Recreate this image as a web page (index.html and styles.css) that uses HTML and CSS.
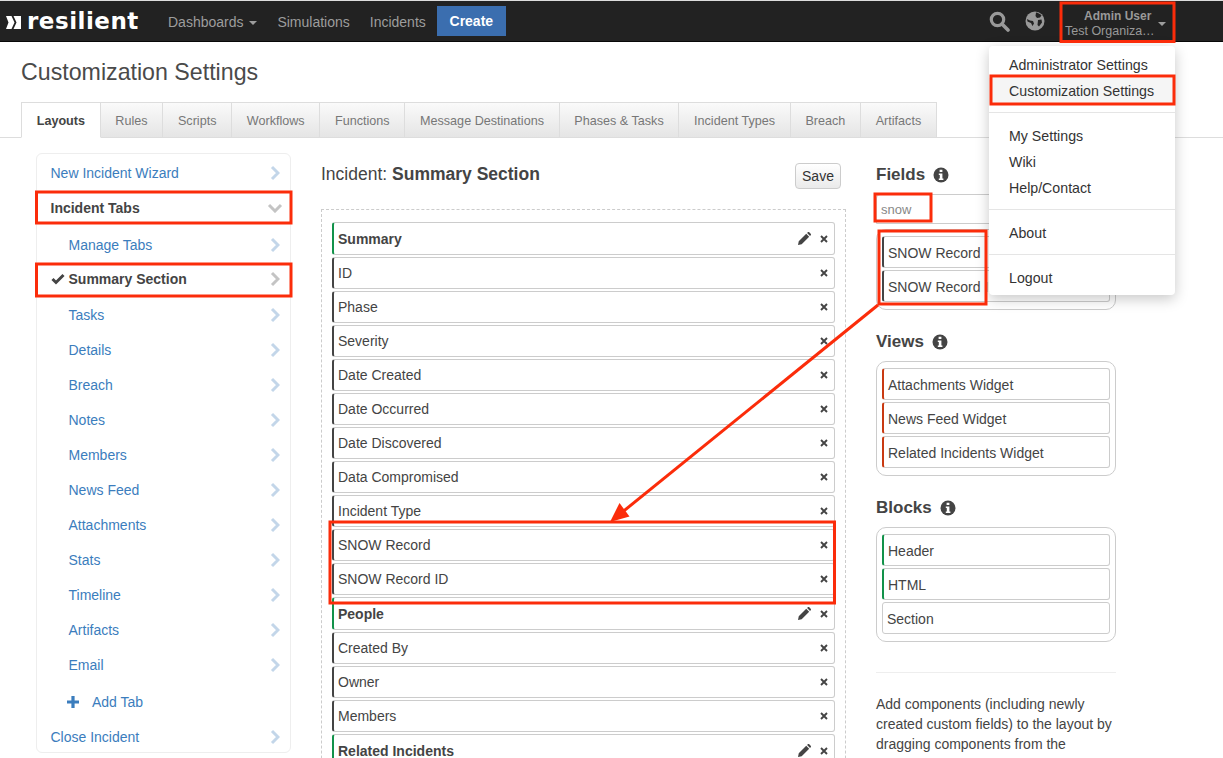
FILE: index.html
```html
<!DOCTYPE html>
<html lang="en">
<head>
  <meta charset="UTF-8" />
  <title>Customization Settings</title>
  <link rel="stylesheet" href="styles.css">
</head>
<body>

  <!-- Icon set, reused below with <use> -->
  <svg class="icon-defs" width="0" height="0">
    <symbol id="i-right" viewBox="0 0 10 16"><polyline points="2,2 8,8 2,14" fill="none" stroke="currentColor" stroke-width="3"/></symbol>
    <symbol id="i-down" viewBox="0 0 16 10"><polyline points="2,2 8,8 14,2" fill="none" stroke="currentColor" stroke-width="3"/></symbol>
    <symbol id="i-check" viewBox="0 0 14 12"><polyline points="1.5,6 5,9.5 12.5,2" fill="none" stroke="currentColor" stroke-width="3"/></symbol>
    <symbol id="i-plus" viewBox="0 0 12 12"><path d="M4.4 0h3.2v4.4H12v3.2H7.6V12H4.4V7.6H0V4.4h4.4z" fill="currentColor"/></symbol>
    <symbol id="i-x" viewBox="0 0 8 8"><path d="M1 1l6 6M7 1L1 7" fill="none" stroke="currentColor" stroke-width="1.9"/></symbol>
    <symbol id="i-pencil" viewBox="0 0 12 12"><path d="M0 12l.7-3.4L7.6 1.7l2.7 2.7-6.9 6.9zM8.4.9l.6-.6c.4-.4 1-.4 1.4 0l1.3 1.3c.4.4.4 1 0 1.4l-.6.6z" fill="currentColor"/></symbol>
    <symbol id="i-info" viewBox="0 0 16 16"><circle cx="8" cy="8" r="7.500" fill="currentColor"/><path d="M6.600 2.800h2.800v2.200H6.600zM5.800 6.400h3.600v5h1v1.600H5.800v-1.600h1V8h-1z" fill="#fff"/></symbol>
  </svg>

  <div class="page">
    <nav class="navbar">
      <a class="brand">
        <svg class="brand-mark" width="15" height="13" viewBox="0 0 15 13"><path d="M0 0h5.500l3 6.500-3 6.500H0l2.500-6.500zM7.500 0H15v13H7.500l3-6.500z" fill="#fff"/></svg>
        <span class="brand-name">resilient</span>
      </a>
      <a class="nav-link">Dashboards <span class="caret"></span></a>
      <a class="nav-link">Simulations</a>
      <a class="nav-link">Incidents</a>
      <button class="btn-create">Create</button>

      <div class="nav-right">
        <svg class="nav-icon" width="21" height="21" viewBox="0 0 21 21"><circle cx="8.500" cy="8.500" r="6.200" fill="none" stroke="#999" stroke-width="3.200"/><path d="M13 13l6 6" stroke="#999" stroke-width="3.600" stroke-linecap="round"/></svg>
        <svg class="nav-icon" width="20" height="20" viewBox="0 0 20 20"><circle cx="10" cy="10" r="9.500" fill="#999"/><path d="M11 1.500c2 .3 4 1.200 5.500 3l-1.500 2-3 .5-1.500-2zM13 9l3.500-.5.5 3-3 4-1.500-1.500zM2 8l3 1.500 3 .5 1 2.500L7.500 15 6 12 2.500 10.500z" fill="#222"/></svg>
        <div class="user-menu">
          <div class="user-text">
            <div class="user-name">Admin User</div>
            <div class="user-org">Test Organiza…</div>
          </div>
          <span class="caret"></span>
        </div>
      </div>
    </nav>

    <h1 class="page-title">Customization Settings</h1>

    <ul class="tabs">
      <li class="tab active">Layouts</li>
      <li class="tab">Rules</li>
      <li class="tab">Scripts</li>
      <li class="tab">Workflows</li>
      <li class="tab">Functions</li>
      <li class="tab">Message Destinations</li>
      <li class="tab">Phases &amp; Tasks</li>
      <li class="tab">Incident Types</li>
      <li class="tab">Breach</li>
      <li class="tab">Artifacts</li>
    </ul>

    <div class="columns">
      <aside class="sidebar">
        <a class="side-item">New Incident Wizard <svg class="chev"><use href="#i-right"/></svg></a>
        <a class="side-item current">Incident Tabs <svg class="chev-down"><use href="#i-down"/></svg></a>
        <a class="side-item sub first-sub">Manage Tabs <svg class="chev"><use href="#i-right"/></svg></a>
        <a class="side-item sub current selected"><svg class="check"><use href="#i-check"/></svg>Summary Section <svg class="chev"><use href="#i-right"/></svg></a>
        <a class="side-item sub">Tasks <svg class="chev"><use href="#i-right"/></svg></a>
        <a class="side-item sub">Details <svg class="chev"><use href="#i-right"/></svg></a>
        <a class="side-item sub">Breach <svg class="chev"><use href="#i-right"/></svg></a>
        <a class="side-item sub">Notes <svg class="chev"><use href="#i-right"/></svg></a>
        <a class="side-item sub">Members <svg class="chev"><use href="#i-right"/></svg></a>
        <a class="side-item sub">News Feed <svg class="chev"><use href="#i-right"/></svg></a>
        <a class="side-item sub">Attachments <svg class="chev"><use href="#i-right"/></svg></a>
        <a class="side-item sub">Stats <svg class="chev"><use href="#i-right"/></svg></a>
        <a class="side-item sub">Timeline <svg class="chev"><use href="#i-right"/></svg></a>
        <a class="side-item sub">Artifacts <svg class="chev"><use href="#i-right"/></svg></a>
        <a class="side-item sub">Email <svg class="chev"><use href="#i-right"/></svg></a>
        <a class="side-item add-tab"><svg class="plus"><use href="#i-plus"/></svg>Add Tab</a>
        <a class="side-item">Close Incident <svg class="chev"><use href="#i-right"/></svg></a>
      </aside>

      <section class="layout">
        <div class="layout-head">
          <h2 class="layout-title">Incident: <b>Summary Section</b></h2>
          <button class="btn-save">Save</button>
        </div>
        <div class="dropzone">
          <div class="row title green">Summary <svg class="edit"><use href="#i-pencil"/></svg><svg class="close"><use href="#i-x"/></svg></div>
          <div class="row">ID <svg class="close"><use href="#i-x"/></svg></div>
          <div class="row">Phase <svg class="close"><use href="#i-x"/></svg></div>
          <div class="row">Severity <svg class="close"><use href="#i-x"/></svg></div>
          <div class="row">Date Created <svg class="close"><use href="#i-x"/></svg></div>
          <div class="row">Date Occurred <svg class="close"><use href="#i-x"/></svg></div>
          <div class="row">Date Discovered <svg class="close"><use href="#i-x"/></svg></div>
          <div class="row">Data Compromised <svg class="close"><use href="#i-x"/></svg></div>
          <div class="row">Incident Type <svg class="close"><use href="#i-x"/></svg></div>
          <div class="row">SNOW Record <svg class="close"><use href="#i-x"/></svg></div>
          <div class="row">SNOW Record ID <svg class="close"><use href="#i-x"/></svg></div>
          <div class="row title green">People <svg class="edit"><use href="#i-pencil"/></svg><svg class="close"><use href="#i-x"/></svg></div>
          <div class="row">Created By <svg class="close"><use href="#i-x"/></svg></div>
          <div class="row">Owner <svg class="close"><use href="#i-x"/></svg></div>
          <div class="row">Members <svg class="close"><use href="#i-x"/></svg></div>
          <div class="row title green">Related Incidents <svg class="edit"><use href="#i-pencil"/></svg><svg class="close"><use href="#i-x"/></svg></div>
        </div>
      </section>

      <section class="palette">
        <h3 class="palette-title">Fields <svg class="info"><use href="#i-info"/></svg></h3>
        <input class="search" type="text" value="snow">
        <div class="palette-box">
          <div class="row">SNOW Record</div>
          <div class="row">SNOW Record ID</div>
        </div>

        <h3 class="palette-title">Views <svg class="info"><use href="#i-info"/></svg></h3>
        <div class="palette-box">
          <div class="row orange">Attachments Widget</div>
          <div class="row orange">News Feed Widget</div>
          <div class="row orange">Related Incidents Widget</div>
        </div>

        <h3 class="palette-title">Blocks <svg class="info"><use href="#i-info"/></svg></h3>
        <div class="palette-box">
          <div class="row green">Header</div>
          <div class="row green">HTML</div>
          <div class="row plain">Section</div>
        </div>

        <hr class="palette-rule">
        <p class="palette-help">Add components (including newly created custom fields) to the layout by dragging components from the</p>
      </section>
    </div>

    <!-- User dropdown, open over the page -->
    <ul class="dropdown">
      <li class="drop-item">Administrator Settings</li>
      <li class="drop-item hover">Customization Settings</li>
      <li class="drop-divider"></li>
      <li class="drop-item">My Settings</li>
      <li class="drop-item">Wiki</li>
      <li class="drop-item">Help/Contact</li>
      <li class="drop-divider"></li>
      <li class="drop-item">About</li>
      <li class="drop-divider"></li>
      <li class="drop-item">Logout</li>
    </ul>

    <!-- Red annotations drawn on top of the screenshot -->
    <svg class="annotations" width="1223" height="758" viewBox="0 0 1223 758">
      <g fill="none" stroke="#fb2c0a" stroke-width="3">
        <rect x="1061" y="3" width="113" height="38.500"/>
        <rect x="991" y="76" width="183" height="28"/>
        <rect x="36.500" y="192" width="254.500" height="31"/>
        <rect x="36.500" y="264" width="254.500" height="32"/>
        <rect x="875" y="194" width="56" height="27"/>
        <rect x="879" y="231" width="107" height="73"/>
        <rect x="330" y="522" width="504.500" height="81"/>
        <path d="M878 305L620 514"/>
      </g>
      <path d="M610 522l9.500-19 10 13.500z" fill="#fb2c0a"/>
    </svg>
  </div>

</body>
</html>
```

FILE: styles.css
```css
* {
  box-sizing: border-box;
}
html, body {
  margin: 0;
  padding: 0;
}
body {
  font-family: "Liberation Sans", Arial, sans-serif;
  font-size: 14px;
  color: #444;
  background-color: #fff;
}
.icon-defs {
  position: absolute;
}
.page {
  position: relative;
  width: 1223px;
  height: 758px;
  overflow: hidden;
}

/* Top bar */
.navbar {
  display: flex;
  align-items: center;
  height: 42px;
  padding-left: 6px;
  background-color: #222;
  border-top: 1px solid #ddd;
  border-bottom: 1px solid #080808;
}
.brand {
  display: flex;
  align-items: center;
  gap: 6px;
  width: 162px;
}
.brand-mark {
  margin-top: 3px;
}
.brand-name {
  font-family: "DejaVu Sans", sans-serif;
  font-size: 23px;
  font-weight: bold;
  line-height: 26px;
  color: #fff;
  letter-spacing: 0.5px;
}
.nav-link {
  margin-right: 20px;
  padding-top: 2px;
  color: #9d9d9d;
  font-size: 14px;
}
.caret {
  display: inline-block;
  width: 0;
  height: 0;
  margin-left: 2px;
  vertical-align: middle;
  border-top: 4px solid #9d9d9d;
  border-left: 4px solid transparent;
  border-right: 4px solid transparent;
}
.btn-create {
  width: 69px;
  height: 30px;
  margin-left: -9px;
  padding: 0;
  background-color: #3b6eaf;
  color: #fff;
  border: 0;
  font-family: inherit;
  font-size: 14px;
  font-weight: bold;
}
.nav-right {
  display: flex;
  align-items: center;
  margin-left: auto;
  margin-right: 48px;
}
.nav-icon {
  margin-right: 15px;
}
.user-menu {
  display: flex;
  align-items: center;
  width: 115px;
  height: 40px;
  padding-left: 5px;
}
.user-text {
  width: 93px;
  margin-top: 6px;
  font-size: 12.500px;
  line-height: 15px;
  color: #999;
}
.user-name {
  margin-left: 19px;
  font-size: 12px;
  font-weight: bold;
}
.user-org {
  white-space: nowrap;
}
.user-menu .caret {
  margin: 5px 0 0;
}

/* Heading and tabs */
.page-title {
  margin: 16px 0 15px 21px;
  font-size: 23.200px;
  line-height: 29px;
  font-weight: normal;
  color: #4a4a4a;
}
.tabs {
  display: flex;
  height: 36px;
  margin: 0;
  padding: 0 0 0 21px;
  list-style: none;
  border-bottom: 1px solid #ddd;
}
.tab {
  height: 36px;
  padding: 0 14.700px;
  line-height: 36px;
  font-size: 12.600px;
  color: #777;
  background: linear-gradient(#fafafa, #e5e5e5);
  border: 1px solid #ddd;
  border-left: 0;
}
.tab.active {
  font-weight: bold;
  color: #444;
  background: #fff;
  border-left: 1px solid #ddd;
  border-bottom: 1px solid #fff;
}

/* Three columns */
.columns {
  display: flex;
  align-items: flex-start;
  gap: 30px;
  padding: 15px 0 0 36px;
}

.sidebar {
  flex: none;
  width: 255px;
  height: 600px;
  padding-top: 1px;
  border: 1px solid #eee;
  border-radius: 6px;
}
.side-item {
  display: flex;
  align-items: center;
  height: 35px;
  padding-left: 13.500px;
  color: #3b7dbd;
}
.side-item.sub {
  padding-left: 31.500px;
}
.first-sub {
  margin-top: 2px;
}
.side-item.current {
  font-weight: bold;
  color: #444;
}
.side-item.selected {
  margin: -1px 0 1px;
  padding-left: 14px;
}
.chev {
  width: 10px;
  height: 16px;
  margin-left: auto;
  margin-right: 10px;
  color: #c3d6e9;
}
.selected .chev {
  color: #c4c4c4;
}
.chev-down {
  width: 16px;
  height: 10px;
  margin-left: auto;
  margin-right: 7px;
  color: #c4c4c4;
}
.check {
  flex: none;
  width: 14px;
  height: 12px;
  margin-right: 3.500px;
  color: #444;
}
.add-tab {
  margin-top: 2px;
  padding-left: 30px;
}
.plus {
  width: 12px;
  height: 12px;
  margin-right: 13px;
  color: #3b7dbd;
}

/* Layout editor */
.layout {
  flex: none;
  width: 525px;
}
.layout-head {
  display: flex;
  justify-content: space-between;
  align-items: flex-start;
  height: 56px;
  padding: 10px 5px 0 0;
}
.layout-title {
  margin: 0;
  font-size: 17.500px;
  line-height: 22px;
  font-weight: normal;
  color: #444;
}
.btn-save {
  width: 46px;
  height: 26px;
  padding: 0;
  font-family: inherit;
  font-size: 14px;
  color: #333;
  background: linear-gradient(#fff, #eaeaea);
  border: 1px solid #ccc;
  border-radius: 4px;
}
.dropzone {
  height: 700px;
  padding: 12px 10px 0;
  border: 1px dashed #ccc;
}
.row {
  display: flex;
  align-items: center;
  height: 32px;
  margin-bottom: 2px;
  padding-left: 4px;
  border: 1px solid #ccc;
  border-left: 2px solid #444;
  border-radius: 3px;
  background-color: #fff;
  color: #444;
  font-size: 14px;
  white-space: nowrap;
}
.row.title {
  height: 33px;
  font-weight: bold;
}
.row.green {
  border-left-color: #12924a;
}
.row.orange {
  border-left-color: #c93a12;
}
.row.plain {
  border-left: 1px solid #ccc;
  padding-left: 4px;
}
.edit {
  width: 13px;
  height: 13px;
  margin-left: auto;
  margin-right: 9px;
  color: #444;
}
.close {
  width: 8px;
  height: 8px;
  margin-left: auto;
  margin-right: 6px;
  color: #444;
}
.edit + .close {
  margin-left: 0;
}

/* Right hand palette */
.palette {
  flex: none;
  width: 240px;
  padding-top: 11px;
}
.palette-title {
  display: flex;
  align-items: center;
  gap: 8px;
  margin: 0 0 8px;
  font-size: 17px;
  line-height: 22px;
  font-weight: bold;
  color: #444;
}
.info {
  width: 16px;
  height: 16px;
  color: #444;
}
.search {
  display: block;
  width: 240px;
  height: 30px;
  padding: 0 4px;
  margin-bottom: 5px;
  font-family: inherit;
  font-size: 13px;
  color: #888;
  border: 1px solid #ccc;
  border-radius: 4px 4px 0 0;
}
.palette-box {
  margin-bottom: 21px;
  padding: 6px 5px 5px;
  border: 1px solid #ccc;
  border-radius: 10px;
}
.palette-box .row {
  padding-top: 2px;
}
.palette-rule {
  margin: 30px 0 21px;
  border: 0;
  border-top: 1px solid #eee;
}
.palette-help {
  margin: 0;
  font-size: 14px;
  line-height: 20px;
  color: #444;
}

/* Dropdown */
.dropdown {
  position: absolute;
  top: 46px;
  left: 989px;
  width: 186px;
  height: 249px;
  margin: 0;
  padding: 6px 0 4px;
  list-style: none;
  background-color: #fff;
  border-radius: 4px;
  box-shadow: 0 4px 14px rgba(0, 0, 0, 0.22);
}
.drop-item {
  height: 26px;
  padding-left: 20px;
  line-height: 26px;
  font-size: 14.200px;
  color: #333;
  white-space: nowrap;
}
.drop-item.hover {
  background-color: #f5f5f5;
}
.drop-divider {
  height: 1px;
  margin: 8px 0 10px;
  background-color: #e5e5e5;
}

.annotations {
  position: absolute;
  top: 0;
  left: 0;
  pointer-events: none;
}
```
